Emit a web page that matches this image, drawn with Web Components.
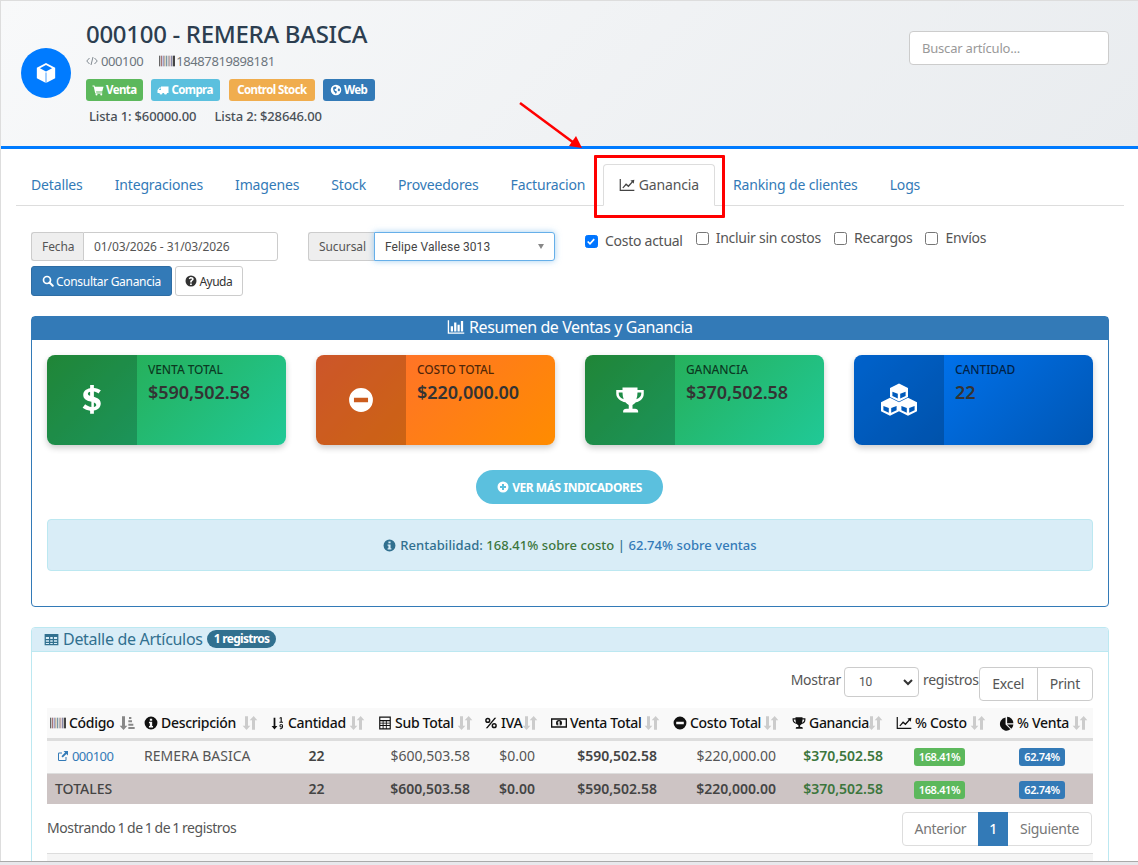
<!DOCTYPE html>
<html lang="es">
<head>
<meta charset="utf-8">
<title>Ganancia</title>
<style>
  html, body { margin: 0; height: 100%; overflow: hidden; background: #fff; }
  body { font: 14px/20px "Noto Sans", sans-serif; color: #555; }
</style>
</head>
<body>
<articulo-page></articulo-page>
<script>
// icons.js
const svg = (body, vb = "0 0 24 24") =>
  `<svg xmlns="http://www.w3.org/2000/svg" viewBox="${vb}" width="1em" height="1em" fill="currentColor" aria-hidden="true">${body}</svg>`;

const bars = () => {
  const xs = [[0, 2, "#666"], [3, 1.5, "#a77"], [5.5, 1.5, "#77a"], [8, 1.5, "#a97"], [10.5, 1.5, "#79a"], [13, 1.5, "#999"], [15.5, 1.5, "#a88"], [18, 1.5, "#88a"], [20.5, 3.5, "#444"]];
  return svg(xs.map(([x, b, c]) => `<rect x="${x}" y="4" width="${b}" height="16" fill="${c}"/>`).join(""));
};

// one isometric box: solid hexagon with the two side faces punched out
const box = (cx, cy, r, g) => {
  const h = r / 2;
  return `M${cx} ${cy - r}L${cx + r} ${cy - h}V${cy + h}L${cx} ${cy + r}L${cx - r} ${cy + h}V${cy - h}Z` +
    `M${cx - r + g} ${cy - h + g * 1.6}L${cx - g / 2} ${cy + g * .5}V${cy + r - g * 1.2}L${cx - r + g} ${cy + h - g * .4}Z` +
    `M${cx + r - g} ${cy - h + g * 1.6}L${cx + g / 2} ${cy + g * .5}V${cy + r - g * 1.2}L${cx + r - g} ${cy + h - g * .4}Z`;
};

const ICONS = {
  cube: svg(`<path fill-rule="evenodd" d="M12 1 2 6.300v11.400L12 23l10-5.300V6.300L12 1Zm0 2.400 6.600 3.500L12 10.400 5.400 6.900 12 3.400Z"/><path d="M12 11.500V23" stroke="#007bff" stroke-width=".8"/>`),
  code: svg(`<path d="M7 6 1.500 12 7 18M17 6l5.500 6L17 18M14 4l-4 16" fill="none" stroke="currentColor" stroke-width="1.700"/>`),
  barcode: bars(),
  cart: svg(`<path d="M1 3h4l.7 2.500H23l-2.500 9.500H8l.5 2h12v2.200H6.500L3.400 5.200H1V3Z"/><circle cx="9" cy="21" r="2"/><circle cx="18.500" cy="21" r="2"/>`),
  truck: svg(`<path d="M8 5h15v13h-3a3 3 0 0 1-6 0h-3a3 3 0 0 1-6 0H1v-6l4-5h3V5ZM3.500 12H8V9H6l-2.500 3Z"/>`),
  globe: svg(`<path fill-rule="evenodd" d="M12 1.500a10.500 10.500 0 1 0 0 21 10.500 10.500 0 0 0 0-21ZM7 6l4-1 2 2-1 2.500-3 1 1 3 3 .5.500 3-2 3-1.500-3-2-1.500L6 10l1-4Zm9 3 3.500.5.500 3-2 2.500-2.500-2L16 9Z"/>`),
  chart: svg(`<path d="M1 3h1.800v16.200H23V21H1V3Z"/><path d="m5 16 5.500-6.500 3.500 3L19 7l-1.800-1.800L23 4l-.9 6-1.600-1.600-6.300 7-3.500-3L6.500 17 5 16Z"/>`),
  search: svg(`<circle cx="10" cy="10" r="7" fill="none" stroke="currentColor" stroke-width="3.400"/><path d="m15 15 6.500 6.500" stroke="currentColor" stroke-width="4" stroke-linecap="round"/>`),
  help: svg(`<path fill-rule="evenodd" d="M12 1a11 11 0 1 0 0 22 11 11 0 0 0 0-22Zm-1.800 16h3.400v3h-3.400v-3Zm1.900-13c3.200 0 5.200 1.800 5.200 4.200 0 2.200-1.400 3-2.600 3.800-.8.500-1.100.9-1.100 2v1h-3.300v-1.200c0-2 .8-2.900 2-3.700.9-.6 1.600-1 1.600-1.800 0-.8-.7-1.300-1.700-1.300-1.100 0-1.900.7-2.300 1.700L7.500 7.300C8.300 5.300 9.900 4 12.100 4Z"/>`),
  barchart: svg(`<path d="M1 3h1.800v16.200H23V21H1V3Z"/><path d="M5 11h3v7H5zM9.500 6h3v12h-3zM14 9h3v9h-3zM18.500 4h3v14h-3z"/>`),
  dollar: svg(`<path d="M13.500 1h-3v2.700C7 4.300 5 6.500 5 9.300c0 3.100 2.300 4.400 5 5.300l1.500.5v4.300c-1.800-.2-3.500-1-5-2.300L4.500 20c1.700 1.400 3.800 2.200 6 2.400V25h3v-2.700c3.300-.6 5.500-2.800 5.500-5.900 0-3.200-2.300-4.500-5-5.400l-.5-.2V6.500c1.300.2 2.600.8 3.700 1.700l1.900-2.800c-1.500-1.100-3.400-1.800-5.600-1.900V1ZM10.500 6.600v3.500c-1.200-.5-1.800-1-1.800-1.800 0-.8.700-1.500 1.800-1.700Zm3 9.100c1.200.5 1.900 1.100 1.900 2s-.7 1.500-1.900 1.700v-3.700Z" transform="translate(0 -1) scale(1 .96)"/>`),
  minus: svg(`<path fill-rule="evenodd" d="M12 1a11 11 0 1 0 0 22 11 11 0 0 0 0-22ZM5.500 10h13v4h-13v-4Z"/>`),
  trophy: svg(`<path fill-rule="evenodd" d="M6 2h12v2h5v3c0 3.700-2.800 6.300-6.300 6.800-.8 1-1.700 1.700-2.700 2.100V19h2c1.500 0 2.500.9 2.500 2v1H6.500v-1c0-1.100 1-2 2.500-2h2v-3.100c-1-.4-1.900-1.100-2.700-2.100C4.800 13.300 1 10.700 1 7V4h5V2ZM3 6v1c0 2 1.500 3.700 3.900 4.400C6.300 9.700 6 7.900 6 6H3Zm15 0c0 1.900-.3 3.700-.9 5.400C19.500 10.700 21 9 21 7V6h-3Z"/>`),
  cubes: svg(`<path fill-rule="evenodd" d="${box(12, 7, 6, 1.600)}${box(6, 16.500, 6, 1.600)}${box(18, 16.500, 6, 1.600)}"/>`),
  pluscircle: svg(`<path fill-rule="evenodd" d="M12 1a11 11 0 1 0 0 22 11 11 0 0 0 0-22Zm-2 5h4v4h4v4h-4v4h-4v-4H6v-4h4V6Z"/>`),
  info: svg(`<path fill-rule="evenodd" d="M12 1a11 11 0 1 0 0 22 11 11 0 0 0 0-22Zm-2 3.500h4V8h-4V4.500ZM8.500 10H14v7h1.500v2.500h-7V17H10v-4.500H8.500V10Z"/>`),
  table: svg(`<path fill-rule="evenodd" d="M1 3h22v18H1V3Zm2 5v3h5V8H3Zm7 0v3h4V8h-4Zm6 0v3h5V8h-5ZM3 13v2.500h5V13H3Zm7 0v2.500h4V13h-4Zm6 0v2.500h5V13h-5ZM3 17.500V19h5v-1.500H3Zm7 0V19h4v-1.500h-4Zm6 0V19h5v-1.500h-5Z"/>`),
  external: svg(`<path d="M10 5H4.500A2.500 2.500 0 0 0 2 7.500v12A2.500 2.500 0 0 0 4.500 22h12a2.500 2.500 0 0 0 2.500-2.500V14h-2v5.500a.5.500 0 0 1-.5.500h-12a.5.500 0 0 1-.5-.5v-12a.5.500 0 0 1 .5-.5H10V5Z"/><path d="M13 2h9v9l-3.200-3.200-7.300 7.300-2.600-2.600 7.300-7.300L13 2Z"/>`),
  sortnum: svg(`<path d="M4.500 3h3v14H11l-5 6-5-6h3.500V3Z"/><path d="M15.500 2h3v8h2v1.500h-6V10h2V4l-1.800.8V3.300L15.500 2ZM17.500 13.500c2 0 3.200 1.400 3.200 4 0 3-1.400 5-4 5h-1.500V21h1.500c1.200 0 1.900-.7 2-1.900-.4.300-.9.400-1.400.4-1.600 0-2.800-1-2.800-2.900 0-1.900 1.200-3.100 3-3.100Zm0 1.500c-.8 0-1.200.6-1.200 1.500s.4 1.500 1.200 1.500c.5 0 .9-.2 1.200-.5 0-1.700-.4-2.500-1.200-2.500Z"/>`),
  calc: svg(`<path fill-rule="evenodd" d="M2 1h20v22H2V1Zm2 2v4h16V3H4Zm0 6v2.500h4V9H4Zm5.500 0v2.500h4V9h-4Zm5.500 0v2.500h5V9h-5ZM4 13v2.500h4V13H4Zm5.500 0v2.500h4V13h-4Zm5.500 0v2.500h5V13h-5ZM4 17v4h4v-4H4Zm5.500 0v4h4v-4h-4Zm5.500 0v4h5v-4h-5Z"/>`),
  percent: svg(`<path fill-rule="evenodd" d="M6.500 3a4.500 4.500 0 1 1 0 9 4.500 4.500 0 0 1 0-9Zm0 2.500a2 2 0 1 0 0 4 2 2 0 0 0 0-4ZM17.500 12a4.500 4.500 0 1 1 0 9 4.500 4.500 0 0 1 0-9Zm0 2.500a2 2 0 1 0 0 4 2 2 0 0 0 0-4ZM18 3h3L6 21H3L18 3Z"/>`),
  money: svg(`<path fill-rule="evenodd" d="M0 5h24v14H0V5Zm2 2v10h20V7H2Zm10 .5a4.500 4.500 0 1 1 0 9 4.500 4.500 0 0 1 0-9ZM11 9.500V11l-1 .3V12.500h1v2H9.800V16h4.400v-1.500H13V9.500h-2Z"/>`),
  pie: svg(`<path d="M10.500 2.500v11l7.800 7.800A10.500 10.500 0 1 1 10.500 2.500Z"/><path d="M13 1a10.500 10.500 0 0 1 10 10.500H13V1Z"/><path d="M13 13.500h10a10.500 10.500 0 0 1-3.300 6.800L13 13.500Z"/>`),
  sort: svg(`<path d="M4.500 2h4.500v14h3.500l-5.700 6.500L1 16h3.500V2Z"/><path d="M17.500 1.500 23 8h-3.500v14H15V8h-3.500l6-6.500Z"/>`),
  sortasc: svg(`<path d="M4.500 2h4.500v14h3.500l-5.700 6.500L1 16h3.500V2Z"/><path d="M15 3h3.500v3H15zM14 8h5.500v3H14zM14 13h7.500v3H14zM14 18h9.500v3H14z"/>`)
};

// ProductHeader.js
customElements.define("product-header", class ProductHeader extends HTMLElement {
  constructor() {
    super();
    this.attachShadow({ mode: "open" }).innerHTML = `
      <style>
        :host {
          display: flex;
          height: 149px;
          box-sizing: border-box;
          padding: 19px 29px 0 20px;
          background: linear-gradient(135deg, #f8f9fa 0%, #e9ecef 100%);
          border-bottom: 3px solid #007bff;
        }
        .avatar {
          width: 50px; height: 50px; margin: 29px 15px 0 1px;
          flex: none; border-radius: 50%; background: #007bff; color: #fff;
          display: flex; align-items: center; justify-content: center; font-size: 22px;
        }
        .main { flex: 1; }
        h1 { margin: 0; font-size: 24px; line-height: 30px; font-weight: 500; color: #2c3e50; letter-spacing: -.3px; }
        .codes { display: flex; margin-top: 2px; font-size: 13px; line-height: 20px; color: #6c757d; height: 20px; letter-spacing: -.4px; }
        .codes span { display: inline-flex; align-items: center; gap: 3px; margin-right: 16px; }
        .codes svg { font-size: 12px; }
        .codes .bar { gap: 1px; }
        .codes .bar svg { font-size: 16px; }
        .badges { display: flex; gap: 8px; margin-top: 8px; }
        .badge {
          display: inline-flex; align-items: center; gap: 2px; height: 22px; padding: 0 7px 0 6px;
          border-radius: 3px; color: #fff; font-size: 11.5px; font-weight: 700; letter-spacing: -.6px;
        }
        .badge svg { font-size: 12px; }
        .badge.stock { padding: 0 8.5px; margin-left: 1px; }
        .badge.web { padding: 0 8px 0 7px; }
        .prices { margin: 5px 0 0 3px; font-size: 13px; line-height: 20px; font-weight: 500; color: #495057; letter-spacing: -.15px; }
        .prices span { margin-right: 15px; }
        input {
          width: 200px; height: 34px; box-sizing: border-box; margin-top: 12px; padding: 6px 12px;
          border: 1px solid #ccc; border-radius: 4px; background: #fff;
          font: 13px "Noto Sans", sans-serif; color: #555; letter-spacing: -.2px;
        }
        input::placeholder { color: #999; opacity: 1; }
      </style>
      <div class="avatar">${ICONS.cube}</div>
      <div class="main">
        <h1>000100 - REMERA BASICA</h1>
        <div class="codes">
          <span>${ICONS.code} 000100</span>
          <span class="bar">${ICONS.barcode} 18487819898181</span>
        </div>
        <div class="badges">
          <span class="badge" style="background:#5cb85c">${ICONS.cart} Venta</span>
          <span class="badge" style="background:#5bc0de">${ICONS.truck} Compra</span>
          <span class="badge stock" style="background:#f0ad4e">Control Stock</span>
          <span class="badge web" style="background:#337ab7">${ICONS.globe} Web</span>
        </div>
        <div class="prices"><span>Lista 1: $60000.00</span> <span>Lista 2: $28646.00</span></div>
      </div>
      <input placeholder="Buscar artículo...">
    `;
  }
});

// NavTabs.js
customElements.define("nav-tabs", class NavTabs extends HTMLElement {
  constructor() {
    super();
    const tabs = ["Detalles", "Integraciones", "Imagenes", "Stock", "Proveedores", "Facturacion", "Ganancia", "Ranking de clientes", "Logs"];
    this.attachShadow({ mode: "open" }).innerHTML = `
      <style>
        :host { display: flex; margin: 15px 14px 0 16px; border-bottom: 1px solid #ddd; height: 41px; letter-spacing: -.15px; }
        a { display: block; height: 42px; box-sizing: border-box; padding: 11px 15px 0; margin-right: 2px; color: #337ab7; white-space: nowrap; }
        a.active { padding: 10px 15px 0; color: #555; background: #fff; border: 1px solid #ddd; border-bottom-color: #fff; border-radius: 4px 4px 0 0; margin: 0 3px 0 1px; }
        svg { font-size: 16px; vertical-align: -3px; color: #444; }
      </style>
      ${tabs.map(t => t === "Ganancia"
        ? `<a class="active">${ICONS.chart} ${t}</a>`
        : `<a>${t}</a>`).join("")}
    `;
  }
});

// FilterBar.js
customElements.define("filter-bar", class FilterBar extends HTMLElement {
  constructor() {
    super();
    this.attachShadow({ mode: "open" }).innerHTML = `
      <style>
        :host { display: block; margin: 26px 0 0 31px; height: 84px; font-size: 12px; letter-spacing: -.1px; }
        .row { display: flex; height: 29px; }
        .group { display: flex; height: 29px; }
        .addon {
          display: flex; align-items: center; box-sizing: border-box; padding: 0 10px; background: #eee; color: #555;
          border: 1px solid #ccc; border-right: 0; border-radius: 3px 0 0 3px;
        }
        .field {
          display: flex; align-items: center; justify-content: space-between; box-sizing: border-box; padding: 0 10px;
          border: 1px solid #ccc; border-radius: 0 3px 3px 0; background: #fff; color: #555;
        }
        .sel { border-color: #66afe9; box-shadow: 0 0 6px rgba(102,175,233,.6); font-family: Roboto, sans-serif; letter-spacing: .1px; color: #444; }
        .caret { width: 0; height: 0; border: 3.500px solid transparent; border-top: 5px solid #888; border-bottom: 0; }
        label { display: inline-flex; align-items: center; height: 20px; font-size: 14px; color: #555; white-space: nowrap; letter-spacing: -.27px; margin: -4px 13px 0 0; }
        label.first { margin-top: -1px; margin-left: 30px; }
        .check { width: 13px; height: 13px; box-sizing: border-box; border: 1px solid #767676; border-radius: 2.500px; margin-right: 7px; background: #fff; }
        .check.on { background: #0075ff; border-color: #0075ff; display: flex; }
        .btns { display: flex; gap: 3px; margin-top: 5px; }
        button {
          height: 30px; box-sizing: border-box; padding: 0 10px; border: 1px solid #ccc; border-radius: 3px;
          font: 12px "Noto Sans", sans-serif; background: #fff; color: #333; display: inline-flex; align-items: center; gap: 2px; letter-spacing: -.3px;
        }
        button.help { letter-spacing: -.5px; padding: 0 9.500px; }
        button.primary { background: #337ab7; border-color: #2e6da4; color: #fff; }
      </style>
      <div class="row">
        <div class="group" style="width:247px">
          <div class="addon" style="width:52px">Fecha</div>
          <div class="field" style="width:195px">01/03/2026 - 31/03/2026</div>
        </div>
        <div class="group" style="width:247px;margin-left:30px">
          <div class="addon" style="width:66px">Sucursal</div>
          <div class="field sel" style="width:181px">Felipe Vallese 3013<span class="caret"></span></div>
        </div>
        <label class="first"><span class="check on"><svg viewBox="0 0 13 13" width="11" height="11"><path d="m2 6.500 2.700 2.700 5-5.500" fill="none" stroke="#fff" stroke-width="2"/></svg></span>Costo actual</label>
        <label><span class="check"></span>Incluir sin costos</label>
        <label><span class="check"></span>Recargos</label>
        <label><span class="check"></span>Envíos</label>
      </div>
      <div class="btns">
        <button class="primary">${ICONS.search} Consultar Ganancia</button>
        <button class="help">${ICONS.help} Ayuda</button>
      </div>
    `;
  }
});

// StatCard.js
customElements.define("stat-card", class StatCard extends HTMLElement {
  constructor() {
    super();
    const icon = ICONS[this.getAttribute("icon")] || "";
    this.attachShadow({ mode: "open" }).innerHTML = `
      <style>
        :host {
          display: flex; height: 90px; overflow: hidden; border-radius: 8px; color: #2c3e50;
          background: linear-gradient(135deg, var(--from), var(--to));
          box-shadow: 0 3px 6px rgba(0,0,0,.2);
        }
        .icon {
          flex: none; width: 90px; display: flex; align-items: center; justify-content: center;
          background: rgba(0,0,0,.2); color: #fff; font-size: var(--icon, 30px);
        }
        .body { padding: 6px 11px; }
        .label { font-size: 12px; line-height: 18px; font-weight: 500; text-transform: uppercase; color: rgba(0,0,0,.7); letter-spacing: -.1px; }
        .value { font-size: 18px; line-height: 26px; font-weight: 600; color: #333; letter-spacing: -.05px; }
      </style>
      <div class="icon">${icon}</div>
      <div class="body">
        <div class="label">${this.getAttribute("label")}</div>
        <div class="value">${this.getAttribute("value")}</div>
      </div>
    `;
  }
});

// SummaryPanel.js
customElements.define("summary-panel", class SummaryPanel extends HTMLElement {
  constructor() {
    super();
    this.attachShadow({ mode: "open" }).innerHTML = `
      <style>
        :host {
          display: block; margin: 0 29px 0 31px; height: 291px; box-sizing: border-box;
          border: 1px solid #337ab7; border-radius: 4px;
        }
        .head {
          height: 23px; background: #337ab7; color: #fff; text-align: center;
          font-size: 16px; line-height: 21px; font-weight: 400; letter-spacing: -.4px;
        }
        .head svg { vertical-align: -3px; width: 18px; height: 18px; }
        .cards { display: grid; grid-template-columns: repeat(4, 239px); column-gap: 30px; margin: 15px 15px 0; }
        .more { display: flex; justify-content: center; margin: 25px 1px 0 0; }
        button {
          width: 187px; height: 34px; border: 0; border-radius: 17px; background: #5bc0de; color: #fff;
          font: 700 12px "Noto Sans", sans-serif; display: flex; align-items: center; justify-content: center; gap: 3px; letter-spacing: -.45px;
        }
        .alert {
          margin: 15px 15px 0; height: 52px; box-sizing: border-box; display: flex; align-items: center; justify-content: center; gap: 4px;
          background: #d9edf7; border: 1px solid #bce8f1; border-radius: 4px; color: #31708f; font-size: 13px; font-weight: 500; letter-spacing: .05px;
        }
        .g { color: #3c763d; }
        .b { color: #337ab7; }
      </style>
      <div class="head">${ICONS.barchart} Resumen de Ventas y Ganancia</div>
      <div class="cards"><slot></slot></div>
      <div class="more"><button>${ICONS.pluscircle} VER MÁS INDICADORES</button></div>
      <div class="alert"><span>${ICONS.info.replace('<svg', '<svg style="vertical-align:-2px"')}</span><span>Rentabilidad: <span class="g">168.41% sobre costo</span> | <span class="b">62.74% sobre ventas</span></span></div>
    `;
  }
});

// DetailTable.js
customElements.define("detail-table", class DetailTable extends HTMLElement {
  constructor() {
    super();
    const cols = [89, 127, 107, 108, 65, 122, 119, 104, 103, 102];
    const heads = [
      ["barcode", "Código", "sortasc", 16], ["info", "Descripción"], ["sortnum", "Cantidad"], ["calc", "Sub Total"],
      ["percent", "IVA"], ["money", "Venta Total", "", 16], ["minus", "Costo Total"], ["trophy", "Ganancia"], ["chart", "% Costo", "", 16], ["pie", "% Venta", "", 15]
    ];
    const row = (label, desc, sub, costo, bold) => `
      <tr class="${bold ? "tot" : "first"}">
        <td>${label}</td>
        <td>${desc}</td>
        <td class="c"><b>22</b></td>
        <td class="r">${bold ? "<b>" + sub + "</b>" : sub}</td>
        <td class="r">${bold ? "<b>$0.00</b>" : "$0.00"}</td>
        <td class="r"><b>$590,502.58</b></td>
        <td class="r">${bold ? "<b>" + costo + "</b>" : costo}</td>
        <td class="r gan"><b>$370,502.58</b></td>
        <td class="c"><span class="tag" style="background:#5cb85c">168.41%</span></td>
        <td class="c"><span class="tag" style="background:#337ab7">62.74%</span></td>
      </tr>`;
    this.attachShadow({ mode: "open" }).innerHTML = `
      <style>
        :host { display: block; }
        table { width: 1046px; table-layout: fixed; border-collapse: collapse; font-size: 14px; }
        th {
          height: 30px; padding: 0 0 0 8px; background: #f9f9f9; border-bottom: 3px solid #ddd; color: #111;
          font-weight: 500; text-align: left; white-space: nowrap; letter-spacing: -.3px;
        }
        th div { display: flex; align-items: center; justify-content: space-between; padding-right: 5px; }
        th:first-child div { padding-right: 1px; }
        th span { display: inline-flex; align-items: center; gap: 3px; }
        th svg { font-size: 14px; flex: none; }
        th .s { color: #ccc; margin-left: -4px; }
        th .s.on { color: #888; }
        th:first-child { padding-left: 3px; }
        th:nth-child(5) { padding-left: 6px; }
        td { height: 32px; padding: 0 8px; background: #f9f9f9; border-bottom: 1px solid #ddd; color: #555; white-space: nowrap; }
        .first td { padding-bottom: 2px; height: 30px; }
        td b { font-weight: 600; color: #444; }
        .tot td { height: 30px; background: #cdc4c4; border-bottom: 0; color: #444; font-weight: 500; }
        .c { text-align: center; }
        .r { text-align: right; }
        .first .gan, .tot .gan { padding-right: 5px; }
        .gan b { color: #3c763d; }
        a { color: #337ab7; font-size: 13px; letter-spacing: -.5px; margin-left: 2px; }
        a svg { font-size: 12px; vertical-align: -1px; }
        .tag {
          display: inline-block; height: 18px; line-height: 18px; padding: 0 5px; border-radius: 3px; color: #fff;
          font-size: 11px; font-weight: 600; letter-spacing: -.4px; vertical-align: middle;
        }
      </style>
      <table>
        <colgroup>${cols.map(w => `<col style="width:${w}px">`).join("")}</colgroup>
        <thead><tr>${heads.map(([i, t, s, size]) => `
          <th><div><span>${size ? ICONS[i].replace('<svg', `<svg style="font-size:${size}px"`) : ICONS[i]} ${t}</span><svg class="s ${s ? "on" : ""}" viewBox="0 0 24 24" width="16" height="16" style="font-size:16px" fill="currentColor">${(s ? ICONS[s] : ICONS.sort).replace(/^<svg[^>]*>|<\/svg>$/g, "")}</svg></div></th>`).join("")}
        </tr></thead>
        <tbody>
          ${row(`<a>${ICONS.external} 000100</a>`, "REMERA BASICA", "$600,503.58", "$220,000.00", false)}
          ${row("TOTALES", "", "$600,503.58", "$220,000.00", true)}
        </tbody>
      </table>
    `;
  }
});

// DetailPanel.js
customElements.define("detail-panel", class DetailPanel extends HTMLElement {
  constructor() {
    super();
    this.attachShadow({ mode: "open" }).innerHTML = `
      <style>
        :host {
          display: block; margin: 20px 29px 0 31px; box-sizing: border-box; height: 300px;
          border: 1px solid #bce8f1; border-radius: 4px 4px 0 0;
        }
        .head {
          height: 22px; padding: 0 0 1px 12px; background: #d9edf7; border-bottom: 1px solid #bce8f1; color: #31708f;
          font-size: 16px; line-height: 21px; display: flex; align-items: center; gap: 4px;
          border-radius: 3px 3px 0 0; letter-spacing: -.3px;
        }
        .head svg { font-size: 15px; }
        .pill {
          display: inline-block; height: 18px; line-height: 18px; padding: 0 7px; border-radius: 9px; background: #31708f; color: #fff;
          font-size: 12px; font-weight: 700; letter-spacing: -.7px;
        }
        .body { padding: 15px 15px 0; }
        .tools { display: flex; justify-content: flex-end; height: 41px; letter-spacing: -.25px; }
        .tools > span { line-height: 26px; }
        .select {
          display: flex; align-items: center; justify-content: space-between; width: 75px; height: 30px; box-sizing: border-box; margin: 0 4px 0 3px; padding: 0 4px 0 14px;
          border: 1px solid #ccc; border-radius: 4px; font-size: 12px; font-family: Roboto, sans-serif;
        }
        .btns { display: flex; height: 34px; border: 1px solid #ccc; border-radius: 4px; box-sizing: border-box; }
        .btns span { display: flex; align-items: center; padding: 0 12px; }
        .btns span:first-child { padding: 0 12.500px; }
        .btns span + span { border-left: 1px solid #ccc; }
        .foot { display: flex; justify-content: space-between; margin-top: 8px; }
        .foot > span { line-height: 32px; letter-spacing: -.4px; word-spacing: -1.2px; }
        .pager { display: flex; height: 34px; border: 1px solid #ddd; border-radius: 4px; box-sizing: border-box; margin-right: 1px; letter-spacing: -.3px; }
        .pager span { display: flex; align-items: center; padding: 0 12px; color: #777; }
        .pager .on { background: #337ab7; color: #fff; padding: 0 11px; margin: -1px 0; font-weight: 500; }
        .next { height: 1px; background: #ddd; margin-top: 7px; }
        .shade { height: 10px; background: #f5f5f5; }
      </style>
      <div class="head">${ICONS.table} Detalle de Artículos <span class="pill">1 registros</span></div>
      <div class="body">
        <div class="tools">
          <span>Mostrar</span>
          <div class="select">10 <svg viewBox="0 0 12 12" width="12" height="12"><path d="m2 4 4 4 4-4" fill="none" stroke="#333" stroke-width="2"/></svg></div>
          <span>registros</span>
          <div class="btns"><span>Excel</span><span>Print</span></div>
        </div>
        <slot></slot>
        <div class="foot">
          <span>Mostrando 1 de 1 de 1 registros</span>
          <div class="pager"><span>Anterior</span><span class="on">1</span><span>Siguiente</span></div>
        </div>
        <div class="next"></div><div class="shade"></div>
      </div>
    `;
  }
});

// RedMarks.js - annotation drawn over the screenshot
customElements.define("red-marks", class RedMarks extends HTMLElement {
  constructor() {
    super();
    this.attachShadow({ mode: "open" }).innerHTML = `
      <style>
        :host { position: absolute; left: 0; top: 0; width: 100%; height: 100%; pointer-events: none; }
        svg { position: absolute; left: 0; top: 0; }
        .box { position: absolute; left: 594px; top: 155px; width: 131px; height: 63px; box-sizing: border-box; border: 3px solid #f00; border-radius: 1px; }
      </style>
      <svg width="1138" height="865">
        <path d="M520 103 574 143" stroke="#f00" stroke-width="2.500" fill="none"/>
        <path d="M582 148 569 146 576 136Z" fill="#f00"/>
      </svg>
      <div class="box"></div>
    `;
  }
});

// ArticuloPage.js
customElements.define("articulo-page", class ArticuloPage extends HTMLElement {
  constructor() {
    super();
    this.attachShadow({ mode: "open" }).innerHTML = `
      <style>
        :host { display: block; position: relative; height: 865px; overflow: hidden; }
        .edge { position: absolute; inset: 0 0 auto 0; height: 100%; box-sizing: border-box; border-top: 1px solid #ddd; border-left: 1px solid #ddd; pointer-events: none; }
        .status { position: absolute; left: 0; right: 0; bottom: 0; height: 3px; background: #e8e8ec; border-top: 1px solid #aaa; }
      </style>
      <product-header></product-header>
      <nav-tabs></nav-tabs>
      <filter-bar></filter-bar>
      <summary-panel>
        <stat-card icon="dollar" label="Venta Total" value="$590,502.58" style="--from:#28a745;--to:#20c997"></stat-card>
        <stat-card icon="minus" label="Costo Total" value="$220,000.00" style="--from:#ff6b35;--to:#ff8c00;--icon:26px"></stat-card>
        <stat-card icon="trophy" label="Ganancia" value="$370,502.58" style="--from:#28a745;--to:#20c997"></stat-card>
        <stat-card icon="cubes" label="Cantidad" value="22" style="--from:#007bff;--to:#0056b3;--icon:36px"></stat-card>
      </summary-panel>
      <detail-panel><detail-table></detail-table></detail-panel>
      <div class="edge"></div>
      <div class="status"></div>
      <red-marks></red-marks>
    `;
  }
});
</script>
</body>
</html>
